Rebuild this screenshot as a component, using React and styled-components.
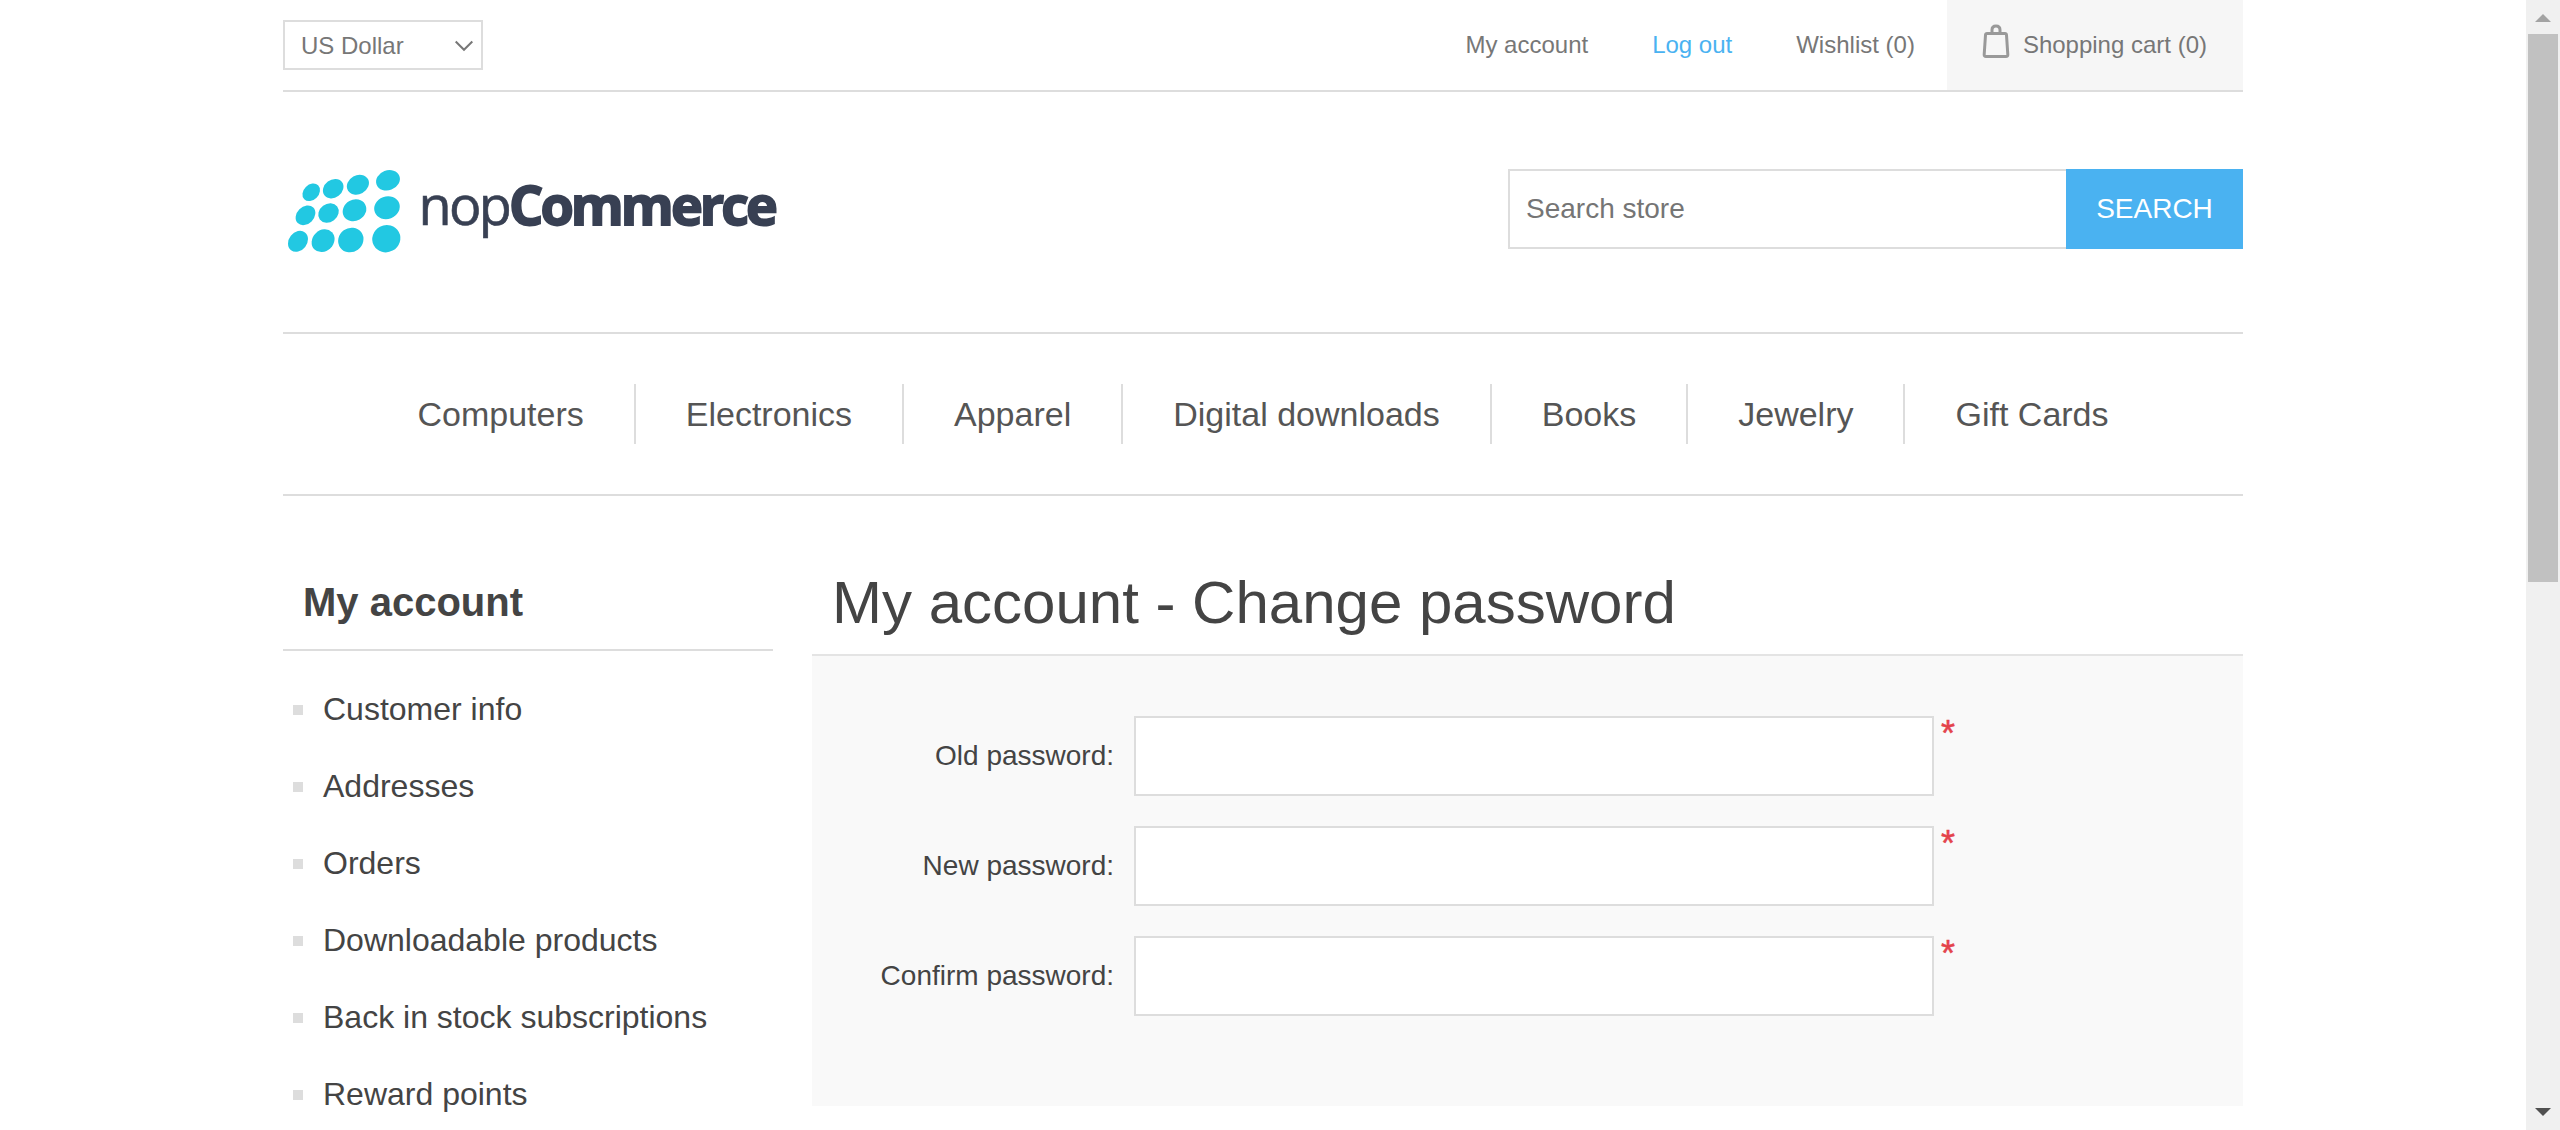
import React from "react";
import styled, { createGlobalStyle } from "styled-components";

const GlobalStyle = createGlobalStyle`
  *, *::before, *::after { box-sizing: border-box; }
  html, body { margin: 0; padding: 0; background: #fff; overflow: hidden; }
  body, input, button { font-family: Arial, "Liberation Sans", Helvetica, sans-serif; }
`;

const Viewport = styled.div`
  display: flex;
  height: 1130px;
  overflow: hidden;
  background: #fff;
`;

const Page = styled.div`
  flex: 1;
  min-width: 0;
  height: 1130px;
  overflow: hidden;
`;

const Wrapper = styled.div`
  width: 1960px;
  margin: 0 auto;
`;

const HeaderUpper = styled.header`
  display: flex;
  justify-content: space-between;
  height: 92px;
  border-bottom: 2px solid #ddd;
`;

const CurrencySelect = styled.div`
  display: flex;
  align-items: center;
  justify-content: space-between;
  width: 200px;
  height: 50px;
  margin-top: 20px;
  padding: 1px 7px 0 16px;
  border: 2px solid #ddd;
  font-size: 24px;
  color: #777;
`;

const HeaderLinks = styled.nav`
  display: flex;
  height: 90px;
`;

const HeaderLink = styled.a`
  padding: 0 32px;
  font-size: 24px;
  line-height: 90px;
  color: ${(p) => (p.$active ? "#4ab2f1" : "#777")};
  white-space: nowrap;
`;

const CartLink = styled(HeaderLink)`
  display: flex;
  gap: 13px;
  padding: 0 36px 0 35px;
  background: #f6f6f6;
`;

const BagIcon = styled.svg`
  width: 28px;
  height: 36px;
  margin-top: 24px;
`;

const HeaderLower = styled.div`
  display: flex;
  justify-content: space-between;
  height: 242px;
  padding-top: 72px;
  border-bottom: 2px solid #ddd;
`;

const Logo = styled.svg`
  width: 520px;
  height: 100px;
  overflow: visible;
  filter: blur(0.5px);
`;

const SearchBox = styled.form`
  display: flex;
  height: 80px;
  margin-top: 5px;
`;

const SearchInput = styled.input`
  width: 558px;
  height: 80px;
  padding: 0 16px;
  border: 2px solid #ddd;
  border-right: 0;
  border-radius: 0;
  font-size: 28px;
  color: #777;
  outline: none;
  &::placeholder { color: #757575; opacity: 1; }
`;

const SearchButton = styled.button`
  width: 177px;
  height: 80px;
  padding: 0;
  border: 0;
  background: #4ab2f1;
  font-size: 28px;
  color: #fff;
`;

const Menu = styled.nav`
  display: flex;
  justify-content: center;
  height: 162px;
  padding-top: 50px;
  border-bottom: 2px solid #ddd;
`;

const MenuItem = styled.a`
  height: 60px;
  padding: 0 50px;
  font-size: 34px;
  line-height: 60px;
  color: #555;
  white-space: nowrap;
  & + & { border-left: 2px solid #ddd; }
`;

const Columns = styled.div`
  display: flex;
  justify-content: space-between;
`;

const Sidebar = styled.aside`
  width: 490px;
  padding-top: 73px;
`;

const SidebarTitle = styled.h3`
  height: 82px;
  margin: 0;
  padding: 10px 20px 0;
  border-bottom: 2px solid #ddd;
  font-size: 40px;
  line-height: 46px;
  color: #444;
`;

const AccountList = styled.ul`
  display: grid;
  gap: 40px;
  margin: 0;
  padding: 40px 10px 0;
  list-style: none;
`;

const AccountItem = styled.li`
  display: flex;
  align-items: center;
  gap: 20px;
  height: 37px;
  font-size: 32px;
  line-height: 37px;
  color: #444;
  white-space: nowrap;
  &::before {
    content: "";
    width: 10px;
    height: 10px;
    background: #ddd;
  }
`;

const Content = styled.main`
  width: 1431px;
  padding-top: 70px;
`;

const PageTitle = styled.h1`
  height: 90px;
  margin: 0;
  padding: 2px 20px 0;
  border-bottom: 2px solid #e4e4e4;
  font-size: 60px;
  font-weight: 400;
  line-height: 70px;
  color: #444;
`;

const FormPanel = styled.div`
  display: grid;
  align-content: start;
  gap: 30px;
  height: 450px;
  padding-top: 60px;
  background: #f9f9f9;
`;

const Field = styled.div`
  display: grid;
  grid-template-columns: 302px 800px auto;
  column-gap: 20px;
  height: 80px;
`;

const FieldLabel = styled.label`
  font-size: 28px;
  line-height: 79px;
  text-align: right;
  color: #444;
  white-space: nowrap;
`;

const FieldInput = styled.input`
  width: 800px;
  height: 80px;
  padding: 0 16px;
  border: 2px solid #ddd;
  border-radius: 0;
  background: #fff;
  font-size: 28px;
  outline: none;
`;

const Required = styled.span`
  margin-left: -13px;
  font-size: 36px;
  line-height: 36px;
  color: #e4434b;
  -webkit-text-stroke: 0.5px #e4434b;
`;

const ScrollTrack = styled.div`
  display: flex;
  flex-direction: column;
  align-items: center;
  width: 34px;
  height: 1130px;
  padding: 14px 0;
  background: #f0f0f0;
`;

const ScrollArrow = styled.svg`
  width: 16px;
  height: 8px;
  flex: none;
  fill: ${(p) => (p.$enabled ? "#505050" : "#a3a3a3")};
`;

const ScrollThumb = styled.div`
  width: 30px;
  height: 548px;
  margin: 12px 0 auto;
  background: #c1c1c1;
`;

const dots = [
  [28.2, 28.3, 9.8, 7.6], [50.2, 24.7, 11, 8.9], [74.9, 20.7, 11.5, 9.4], [105, 16.3, 12.2, 9.9],
  [22.5, 51.3, 11, 8.6], [45.5, 49, 10.9, 9], [71.5, 46.3, 12.2, 10.5], [104, 43.7, 13, 11.3],
  [15, 77.3, 11.3, 9.1], [40.1, 76.7, 12.3, 10.5], [67.8, 76, 13, 12], [103.3, 74.7, 14.2, 13.5],
];

const categories = ["Computers", "Electronics", "Apparel", "Digital downloads", "Books", "Jewelry", "Gift Cards"];
const accountPages = ["Customer info", "Addresses", "Orders", "Downloadable products", "Back in stock subscriptions", "Reward points"];
const fields = ["Old password:", "New password:", "Confirm password:"];

function NopLogo() {
  return (
    <Logo viewBox="0 0 520 100" aria-label="nopCommerce">
      {dots.map(([x, y, rx, ry], i) => (
        <ellipse
          key={i}
          cx={x}
          cy={y}
          rx={rx}
          ry={ry}
          fill="#22c8e2"
          transform={`rotate(${[-45, -45, -52][Math.floor(i / 4)] + (i % 4) * 8} ${x} ${y})`}
        />
      ))}
      <g fill="#384053" stroke="#384053" fontFamily='"Open Sans", "Noto Sans", sans-serif' fontSize="54">
        <text x="135.5" y="60.500" strokeWidth="0.6" letterSpacing="-2.7">nop</text>
        <text x="226" y="60.500" fontWeight="700" strokeWidth="1.8" letterSpacing="-3">Commerce</text>
      </g>
    </Logo>
  );
}

export default function App() {
  return (
    <>
      <GlobalStyle />
      <Viewport>
        <Page>
          <Wrapper>
            <HeaderUpper>
              <CurrencySelect>
                US Dollar
                <svg width="20" height="12" viewBox="0 0 20 12" fill="none" stroke="#777" strokeWidth="2">
                  <path d="M1.7 1.5 10 9.8 18.3 1.5" />
                </svg>
              </CurrencySelect>
              <HeaderLinks>
                <HeaderLink>My account</HeaderLink>
                <HeaderLink $active>Log out</HeaderLink>
                <HeaderLink>Wishlist (0)</HeaderLink>
                <CartLink>
                  <BagIcon viewBox="0 0 28 36" fill="none" stroke="#999" strokeWidth="3" strokeLinejoin="round">
                    <path d="M5 9.500H23Q24.300 9.500 24.500 11L25.800 30.500Q25.900 32.500 24 32.500H4Q2.100 32.500 2.200 30.500L3.500 11Q3.700 9.500 5 9.500Z" />
                    <path d="M10 9V6Q10 2 14 2Q18 2 18 6V9" />
                  </BagIcon>
                  Shopping cart (0)
                </CartLink>
              </HeaderLinks>
            </HeaderUpper>
            <HeaderLower>
              <NopLogo />
              <SearchBox>
                <SearchInput placeholder="Search store" />
                <SearchButton type="button">SEARCH</SearchButton>
              </SearchBox>
            </HeaderLower>
            <Menu>
              {categories.map((c) => (
                <MenuItem key={c}>{c}</MenuItem>
              ))}
            </Menu>
            <Columns>
              <Sidebar>
                <SidebarTitle>My account</SidebarTitle>
                <AccountList>
                  {accountPages.map((p) => (
                    <AccountItem key={p}>{p}</AccountItem>
                  ))}
                </AccountList>
              </Sidebar>
              <Content>
                <PageTitle>My account - Change password</PageTitle>
                <FormPanel>
                  {fields.map((f) => (
                    <Field key={f}>
                      <FieldLabel>{f}</FieldLabel>
                      <FieldInput type="password" />
                      <Required>*</Required>
                    </Field>
                  ))}
                </FormPanel>
              </Content>
            </Columns>
          </Wrapper>
        </Page>
        <ScrollTrack>
          <ScrollArrow viewBox="0 0 16 8"><path d="M0 8 8 0 16 8Z" /></ScrollArrow>
          <ScrollThumb />
          <ScrollArrow $enabled viewBox="0 0 16 8"><path d="M0 0 8 8 16 0Z" /></ScrollArrow>
        </ScrollTrack>
      </Viewport>
    </>
  );
}
